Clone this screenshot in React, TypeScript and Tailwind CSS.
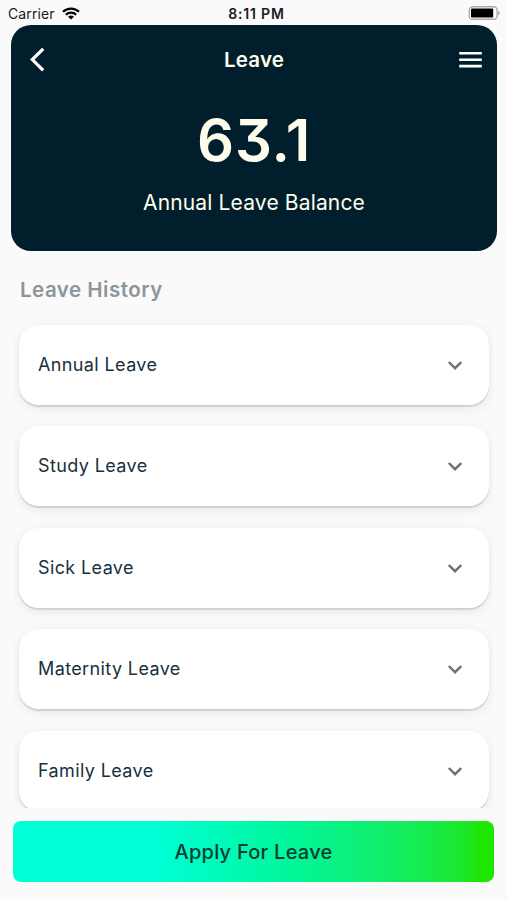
import { useState } from "react";

const App = () => {
    const [openType, setOpenType] = useState<string | null>(null);

    return (
        <div className="w-full h-[900px] bg-[#fafafa] flex flex-col overflow-hidden font-['Inter',sans-serif]">
            <StatusBar />
            <section className="mx-[11px] w-[486px] h-[226px] shrink-0 rounded-[20px] bg-[#001e2b] flex flex-col items-center text-[#fffeed]">
                <div className="w-full h-[70px] pl-[19px] pr-[15px] grid grid-cols-[24px_1fr_24px] items-center">
                    <button aria-label="Back">
                        <svg width="15" height="24" viewBox="0 0 15 24" fill="none" stroke="#fff" strokeWidth="3.2">
                            <path d="M13.2 .8L2.3 11.6l10.9 10.8" />
                        </svg>
                    </button>
                    <h1 className="pr-[4px] text-center text-[20.5px] font-semibold tracking-[0.2px]">Leave</h1>
                    <button aria-label="Menu">
                        <svg width="24" height="16" viewBox="0 0 24 16" fill="#fff">
                            <path d="M1.2 0h22.6v2.6H1.2zM1.2 6.4h22.6V9H1.2zM1.2 12.8h22.6v2.6H1.2z" />
                        </svg>
                    </button>
                </div>
                <p className="mt-[13px] text-[58px] leading-[64px] font-semibold tracking-[0.8px] [font-feature-settings:'cv09']">63.1</p>
                <p className="mt-[18px] text-[21px] leading-[26px] tracking-[0.15px]">Annual Leave Balance</p>
            </section>
            <h2 className="mt-[25px] ml-[20px] h-[28px] shrink-0 text-[20.5px] leading-[28px] font-semibold tracking-[0.5px] text-[#8b959b]">
                Leave History
            </h2>
            <section className="mt-[8px] mx-[14px] h-[496px] shrink-0 overflow-hidden pl-[5px] pr-[4px] pt-[13px] flex flex-col gap-[21.4px]">
                {leaveTypes.map((type) => (
                    <button
                        key={type}
                        className="w-full h-[80px] shrink-0 rounded-[20px] bg-white pl-[19px] pr-[27px] flex items-center justify-between shadow-[0_1.5px_1px_rgba(0,0,0,0.12),0_3px_12px_rgba(0,0,0,0.08)]"
                        onClick={() => setOpenType(openType === type ? null : type)}
                    >
                        <span className="pb-px text-[18px] tracking-[0.38px] text-[#17313e]">{type}</span>
                        <svg
                            className={openType === type ? "rotate-180" : ""}
                            width="15"
                            height="10"
                            viewBox="0 0 15 10"
                            fill="none"
                            stroke="#707070"
                            strokeWidth="2.4"
                        >
                            <path d="M1.8 2l6.2 6.2L14.2 2" />
                        </svg>
                    </button>
                ))}
            </section>
            <button className="mt-[13px] ml-[13px] w-[481px] h-[61px] shrink-0 rounded-[8px] bg-linear-to-r from-[#00ffd5] from-30% to-[#1ee600] to-97% text-[20px] font-medium tracking-[0.25px] text-[#073a32]">
                Apply For Leave
            </button>
        </div>
    );
};

const StatusBar = () => (
    <div className="h-[25px] shrink-0 pl-[8px] pr-[7px] grid grid-cols-3 items-center text-[#1b1b1b]">
        <div className="flex items-center gap-[7px]">
            <span className="pt-[2px] text-[14px] leading-[24px] tracking-[0.1px]">Carrier</span>
            <svg width="18" height="13" viewBox="0 0 18 13" fill="none" stroke="#000" strokeWidth="2.2">
                <path d="M1 4.8a11.5 11.5 0 0 1 16 0M3.8 7.7a7.5 7.5 0 0 1 10.4 0" />
                <path d="M9 12.6L6 9.8a4.4 4.4 0 0 1 6 0z" fill="#000" stroke="none" />
            </svg>
        </div>
        <span className="pl-[5px] pt-[2px] text-center text-[14px] leading-[24px] font-semibold tracking-[0.8px]">8:11 PM</span>
        <svg className="justify-self-end" width="32" height="14" viewBox="0 0 32 14">
            <rect x="1.3" y=".7" width="27.8" height="12.6" rx="3.5" fill="#fff" stroke="#aaa" strokeWidth="1.4" />
            <rect x="3" y="2.4" width="22.2" height="9.2" rx="1" fill="#000" />
            <path d="M30.3 5v4.4c1.8-.8 1.8-3.6 0-4.4z" fill="#999" />
        </svg>
    </div>
);

export default App;

const leaveTypes = ["Annual Leave", "Study Leave", "Sick Leave", "Maternity Leave", "Family Leave"];
